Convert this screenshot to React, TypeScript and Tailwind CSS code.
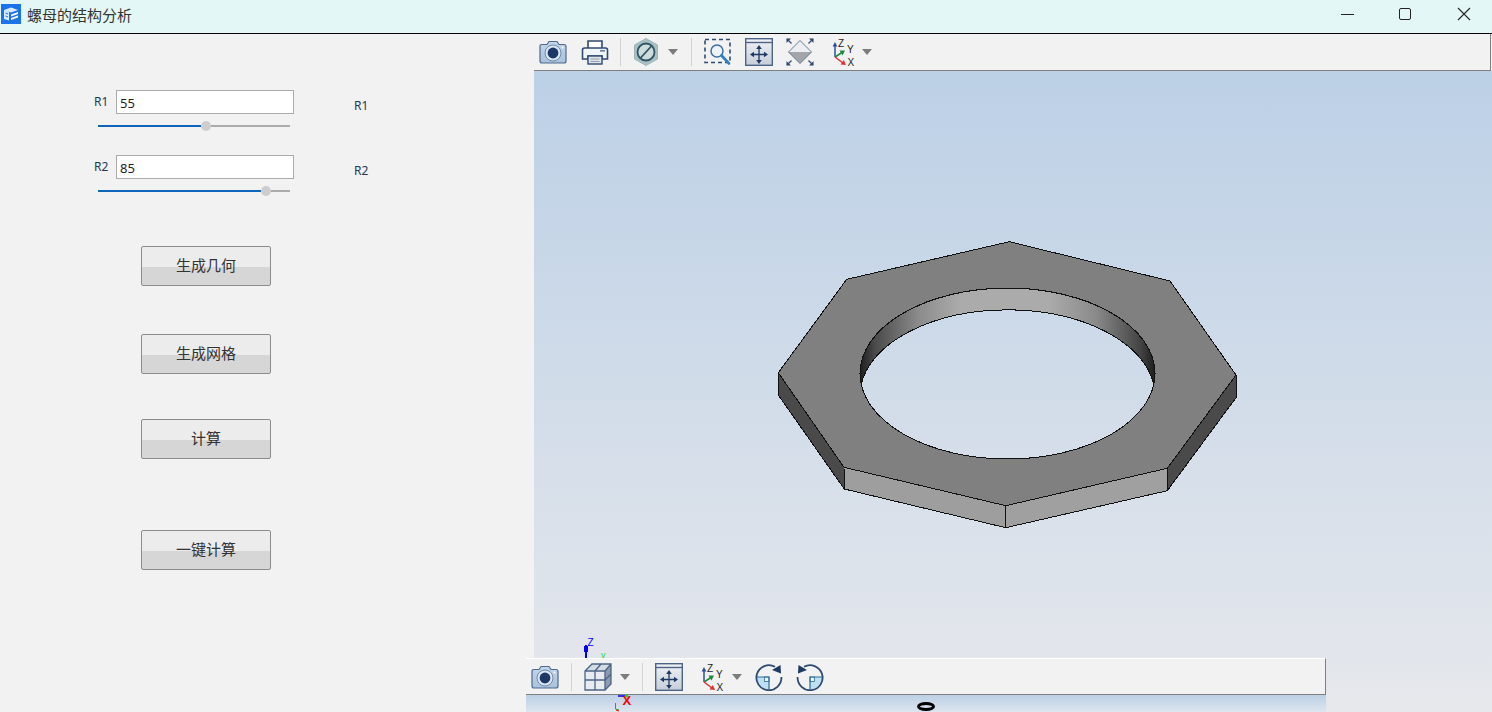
import React from 'react';

const cjk = { fontFamily: '"Noto Sans CJK SC", sans-serif' };
const uiFont = { fontFamily: '"Noto Sans", sans-serif' };

const Camera = () => (
  <svg width="28" height="28" viewBox="0 0 28 28" className="shrink-0">
    <defs>
      <linearGradient id="cam" x1="0" y1="0" x2="0" y2="1">
        <stop offset="0" stopColor="#c3d6ea" />
        <stop offset="1" stopColor="#a9c2dc" />
      </linearGradient>
    </defs>
    <path d="M1 8.5 Q1 6.5 3 6.5 H8 L10 3.5 H18 L20 6.5 H25 Q27 6.5 27 8.5 V23 Q27 25 25 25 H3 Q1 25 1 23Z" fill="url(#cam)" stroke="#4f6a8c" strokeWidth="1.2" />
    <circle cx="14" cy="15" r="8" fill="#dbe6f1" stroke="#6f8bab" strokeWidth="1" />
    <circle cx="14" cy="15" r="5.4" fill="#1d3767" />
    <circle cx="23.5" cy="9.5" r="0.9" fill="#fff" />
  </svg>
);

const Printer = () => (
  <svg width="28" height="28" viewBox="0 0 28 28" className="shrink-0">
    <path d="M7 10 V3 H21 V10" fill="#fff" stroke="#2f4a70" strokeWidth="1.6" />
    <path d="M3.5 10 H24.5 Q26.5 10 26.5 12 V21 H21 V18 H7 V21 H1.5 V12 Q1.5 10 3.5 10Z" fill="#f2f5f8" stroke="#2f4a70" strokeWidth="1.6" />
    <rect x="7" y="18" width="14" height="8" fill="#dfe4ea" stroke="#2f4a70" strokeWidth="1.4" />
    <path d="M9.5 21 H18.5 M9.5 23.5 H18.5" stroke="#8b9db3" strokeWidth="1" />
    <rect x="19" y="12" width="5" height="1.6" fill="#6c7f97" />
  </svg>
);

const HexOff = () => (
  <svg width="28" height="28" viewBox="0 0 28 28" className="shrink-0">
    <path d="M14 0.5 L25.5 7 V21 L14 27.5 L2.5 21 V7Z" fill="#a9c1c3" stroke="#9fb4b8" strokeWidth="1" />
    <circle cx="14" cy="14" r="8.5" fill="#cfdcdc" stroke="#2e5566" strokeWidth="1.8" />
    <path d="M8.5 20 L19.5 8" stroke="#2e5566" strokeWidth="1.8" />
  </svg>
);

const ZoomBox = () => (
  <svg width="28" height="28" viewBox="0 0 28 28" className="shrink-0">
    <rect x="1" y="1.5" width="25" height="23" fill="none" stroke="#2f4a70" strokeWidth="1.6" strokeDasharray="4 3" />
    <circle cx="13" cy="13" r="6" fill="#eef3f8" stroke="#3d6f9f" strokeWidth="1.5" />
    <path d="M17.5 17.5 L25 25.5" stroke="#2d7fc1" strokeWidth="2.6" strokeLinecap="round" />
  </svg>
);

const FitWindow = () => (
  <svg width="28" height="28" viewBox="0 0 28 28" className="shrink-0">
    <defs>
      <linearGradient id="fit" x1="0" y1="0" x2="0" y2="1">
        <stop offset="0" stopColor="#f0f2f5" />
        <stop offset="1" stopColor="#c6ced9" />
      </linearGradient>
    </defs>
    <rect x="0.7" y="0.7" width="26.6" height="26.6" fill="url(#fit)" stroke="#4c6487" strokeWidth="1.4" />
    <path d="M1 4.5 H27" stroke="#4c6487" strokeWidth="1.4" />
    <path d="M14 9 V24 M7 16.5 H21" stroke="#1d3a63" strokeWidth="1.3" />
    <path d="M14 7 L11.2 11 H16.8Z M14 26 L11.2 22 H16.8Z M5 16.5 L9 13.7 V19.3Z M23 16.5 L19 13.7 V19.3Z" fill="#1d3a63" />
  </svg>
);

const DiamondFit = () => (
  <svg width="28" height="28" viewBox="0 0 28 28" className="shrink-0">
    <path d="M14 2.5 L25.5 14 H2.5Z" fill="#eceef1" />
    <path d="M14 25.5 L25.5 14 H2.5Z" fill="#a3a6ab" />
    <path d="M14 2.5 L25.5 14 L14 25.5 L2.5 14Z" fill="none" stroke="#5d6c80" strokeWidth="0.9" />
    <path d="M1 1 L5.5 5.5 M27 1 L22.5 5.5 M1 27 L5.5 22.5 M27 27 L22.5 22.5" stroke="#2f4a70" strokeWidth="1.3" />
    <path d="M0.5 0.5 H5 L0.5 5Z M27.5 0.5 H23 L27.5 5Z M0.5 27.5 H5 L0.5 23Z M27.5 27.5 H23 L27.5 23Z" fill="#2f4a70" />
  </svg>
);

const Triad = () => (
  <svg width="24" height="30" viewBox="0 0 24 30" className="shrink-0" style={{ fontFamily: '"Liberation Sans", sans-serif' }}>
    <path d="M3 20 V8" stroke="#2a4fa0" strokeWidth="1.5" />
    <path d="M3 5 L0.6 9.5 H5.4Z" fill="#2a4fa0" />
    <path d="M3 20 L10 15.5" stroke="#1f8a3c" strokeWidth="1.5" />
    <path d="M13 13.5 L7.5 13.5 L10.5 18.5Z" fill="#1f8a3c" />
    <path d="M3 20 L11 26" stroke="#e03030" strokeWidth="1.5" />
    <path d="M14 28 L8.5 27.5 L11.8 23Z" fill="#e03030" />
    <text x="6" y="10" fontSize="10" fill="#222">Z</text>
    <text x="15" y="16" fontSize="10" fill="#222">Y</text>
    <text x="15.5" y="29" fontSize="10" fill="#222">X</text>
  </svg>
);

const ViewCube = () => (
  <svg width="28" height="28" viewBox="0 0 28 28" className="shrink-0">
    <path d="M1 8 L8 1 H27 L21 8Z" fill="#d5dbe3" />
    <path d="M21 8 L27 1 V21 L21 27Z" fill="#8d9bb0" />
    <rect x="1" y="8" width="20" height="19" fill="#e8ebef" />
    <path d="M1 8 L8 1 H27 V21 L21 27 H1Z M1 8 H21 L27 1 M21 8 V27 M11 8 V27 M1 17 H21 M11 8 L17 1 M21 17 L27 11" fill="none" stroke="#4c6487" strokeWidth="1.3" />
  </svg>
);

const Rotate = ({ flip }: { flip?: boolean }) => (
  <svg width="28" height="28" viewBox="0 0 28 28" className="shrink-0" style={flip ? { transform: 'scaleX(-1)' } : undefined}>
    <path d="M2 14 H14 V26.5 A12.5 12.5 0 0 1 2 14Z" fill="#bfe0f3" />
    <rect x="9.5" y="14" width="4.5" height="4.5" fill="#eaf5fb" stroke="#2d6c9c" strokeWidth="0.8" />
    <path d="M1.5 14 H14 V26" fill="none" stroke="#2d6c9c" strokeWidth="1.2" />
    <path d="M20 3.8 A12.5 12.5 0 1 0 26.4 14" fill="none" stroke="#2f4a70" strokeWidth="1.8" />
    <path d="M25.5 2 L26 10.5 L17 7Z" fill="#1d3a63" />
  </svg>
);

const Caret = () => <div className="w-0 h-0 shrink-0 border-x-[5.5px] border-x-transparent border-t-[6px] border-t-[#7c7c7c]" />;
const Sep = () => <div className="w-px h-[28px] shrink-0 bg-[#d2d2d2]" />;

const Field = ({ label, value, percent, className }: { label: string; value: string; percent: number; className: string }) => (
  <div className={className}>
    <div className="flex items-center">
      <span style={uiFont} className="w-[22px] text-[12px] leading-none text-[#1f3a56]">{label}</span>
      <div style={uiFont} className="w-[178px] h-[24px] border border-[#ababab] bg-white pl-[3px] pt-[1px] text-[13px] leading-[23px] text-[#222]">{value}</div>
    </div>
    <div className="flex items-center ml-[4px] mt-[7px] w-[192px] h-[10px]">
      <div className="h-[2px] bg-[#0f66b8]" style={{ width: percent }} />
      <div className="w-[10px] h-[10px] shrink-0 rounded-full bg-[#cdcdcd]" />
      <div className="h-[2px] flex-1 bg-[#ababab]" />
    </div>
  </div>
);

const ActionButton = ({ text, className }: { text: string; className: string }) => (
  <button
    style={cjk}
    className={`block w-[130px] h-[40px] pb-[2px] rounded-[2px] border border-[#8c8c8c] bg-[linear-gradient(#ececec_52%,#d6d6d6_52%)] text-[15px] text-[#333] ${className}`}
  >
    {text}
  </button>
);

const Nut = () => (
  <svg viewBox="534 71 958 641" className="w-full h-full block">
    <defs>
      <linearGradient id="wall" gradientUnits="userSpaceOnUse" x1="860" y1="0" x2="1155" y2="0">
        <stop offset="0" stopColor="#1e1e1e" />
        <stop offset="0.05" stopColor="#4a4a4a" />
        <stop offset="0.2" stopColor="#8c8c8c" />
        <stop offset="0.34" stopColor="#ababab" />
        <stop offset="0.64" stopColor="#ababab" />
        <stop offset="0.8" stopColor="#8a8a8a" />
        <stop offset="0.95" stopColor="#444" />
        <stop offset="1" stopColor="#1e1e1e" />
      </linearGradient>
    </defs>
    <g stroke="#111" strokeWidth="1" shapeRendering="crispEdges" strokeLinejoin="round">
      <polygon points="778.3,372.7 844,467.3 844.3,489 778.3,395" fill="#4a4a4a" />
      <polygon points="844,467.3 1005.7,505.7 1005.7,527.7 844.3,489" fill="#9e9e9e" />
      <polygon points="1005.7,505.7 1167.3,468.3 1167.3,490.7 1005.7,527.7" fill="#a0a0a0" />
      <polygon points="1167.3,468.3 1236,375 1236,397.7 1167.3,490.7" fill="#4a4a4a" />
      <path
        fillRule="evenodd"
        fill="#808080"
        d="M1009.3 241.7 L1170 281 L1236 375 L1167.3 468.3 L1005.7 505.7 L844 467.3 L778.3 372.7 L846.7 279.3Z M860 373.5 A147.5 85.5 0 0 0 1155 373.5 A147.5 85.5 0 0 0 860 373.5Z"
      />
      <path fill="url(#wall)" d="M861.2 384.5 A147.5 85.5 0 1 1 1153.8 384.5 A147.5 85.5 0 0 0 861.2 384.5Z" />
    </g>
  </svg>
);

export default function App() {
  return (
    <div className="w-[1492px] h-[712px] overflow-hidden relative bg-[#f2f2f2] flex flex-col" style={{ fontFamily: '"Liberation Sans", sans-serif' }}>
      {/* title bar */}
      <div className="h-[34px] shrink-0 flex items-center pb-[5px] bg-[#e3f8f6] border-b border-black">
        <svg width="20" height="20" viewBox="0 0 20 20" className="ml-[1px] shrink-0">
          <rect width="20" height="20" fill="#1a73e8" />
          <path d="M3 6 L10 3.5 L17 6 L10 8.5Z M3 6 V15 L8 16.5 V8Z" fill="#d9ecff" />
          <path d="M10 10.5 L17 8 V10 L10 12.5Z M10 14 L17 11.5 V13.5 L10 16Z" fill="#fff" />
          <path d="M4.5 9 L7 10 M4.5 12 L7 13" stroke="#1a73e8" strokeWidth="1" />
        </svg>
        <span style={cjk} className="ml-[6px] text-[15px] leading-none text-[#333]">螺母的结构分析</span>
        <div className="ml-auto flex items-center mr-[21px]">
          <div className="w-[13px] h-px bg-[#222]" />
          <div className="ml-[45px] w-[12px] h-[12px] rounded-[2px] border-[1.5px] border-[#222]" />
          <svg width="14" height="14" viewBox="0 0 14 14" className="ml-[46px]">
            <path d="M1 1 L13 13 M13 1 L1 13" stroke="#222" strokeWidth="1.1" />
          </svg>
        </div>
      </div>

      <div className="flex flex-1 min-h-0">
        {/* form panel */}
        <div className="w-[534px] shrink-0 pl-[94px]">
          <Field className="mt-[56px]" label="R1" value="55" percent={103} />
          <Field className="mt-[24px]" label="R2" value="85" percent={163} />
          <ActionButton className="ml-[47px] mt-[50px]" text="生成几何" />
          <ActionButton className="ml-[47px] mt-[48px]" text="生成网格" />
          <ActionButton className="ml-[47px] mt-[45px]" text="计算" />
          <ActionButton className="ml-[47px] mt-[71px]" text="一键计算" />
        </div>

        {/* viewer */}
        <div className="flex-1 min-w-0 flex flex-col">
          <div className="h-[37px] shrink-0 flex items-center pl-[5px] mr-px border-b border-r border-[#7f7f7f]">
            <Camera />
            <div className="ml-[14px]"><Printer /></div>
            <div className="ml-[11px]"><Sep /></div>
            <div className="ml-[11px]"><HexOff /></div>
            <div className="ml-[8px]"><Caret /></div>
            <div className="ml-[13px]"><Sep /></div>
            <div className="ml-[12px]"><ZoomBox /></div>
            <div className="ml-[13px]"><FitWindow /></div>
            <div className="ml-[13px]"><DiamondFit /></div>
            <div className="ml-[18px]"><Triad /></div>
            <div className="ml-[6px]"><Caret /></div>
          </div>
          <div className="flex-1 min-h-0 bg-[linear-gradient(#bcd0e6,#e6e8ec)]">
            <Nut />
          </div>
        </div>
      </div>

      {/* second viewer peeking below, its toolbar lies over the first viewer */}
      <div className="absolute left-[526px] top-[658px] w-[800px] h-[54px] flex flex-col">
        <div className="h-[37px] shrink-0 flex items-center pl-[5px] bg-[#f2f2f2] border-t border-t-white border-b border-b-[#7f7f7f] border-r border-r-[#7f7f7f]">
          <Camera />
          <div className="ml-[12px]"><Sep /></div>
          <div className="ml-[12px]"><ViewCube /></div>
          <div className="ml-[8px]"><Caret /></div>
          <div className="ml-[12px]"><Sep /></div>
          <div className="ml-[12px]"><FitWindow /></div>
          <div className="ml-[18px]"><Triad /></div>
          <div className="ml-[7px]"><Caret /></div>
          <div className="ml-[13px]"><Rotate /></div>
          <div className="ml-[13px]"><Rotate flip /></div>
        </div>
        <div className="flex-1 bg-[linear-gradient(#bcd0e6,#dde5ee)]" />
      </div>

      {/* labels beside the form */}
      <span style={uiFont} className="absolute left-[354px] top-[97px] text-[12px] text-[#1f3a56]">R1</span>
      <span style={uiFont} className="absolute left-[354px] top-[162px] text-[12px] text-[#1f3a56]">R2</span>

      {/* stray triad bits of the second viewer */}
      <svg width="50" height="24" viewBox="0 0 50 24" className="absolute left-[580px] top-[636px]" style={{ fontFamily: '"Liberation Sans", sans-serif' }}>
        <path d="M6 9 V22" stroke="#0000ff" strokeWidth="2" />
        <path d="M6 10 V16" stroke="#0000ff" strokeWidth="4" />
        <text x="7.5" y="10" fontSize="10" fill="#0000ff">Z</text>
        <text x="21" y="22" fontSize="9" fill="#22dd22">v</text>
      </svg>
      <svg width="30" height="22" viewBox="0 -5 30 22" className="absolute left-[610px] top-[690px] overflow-visible" style={{ fontFamily: '"Liberation Sans", sans-serif' }}>
        <path d="M8 1 H15" stroke="#0000ff" strokeWidth="1.5" />
        <path d="M15 1 H18" stroke="#22cc22" strokeWidth="3" />
        <text x="12.5" y="10" fontSize="13" fontWeight="700" fill="#ff0000">X</text>
        <path d="M5.5 8 V14 L9 15" fill="none" stroke="#22aa22" strokeWidth="1" />
        <path d="M6 15 L9 16" stroke="#ff0000" strokeWidth="1" />
      </svg>
      <div className="absolute left-[917px] top-[702px] w-[18px] h-[9px] rounded-[50%] border-[3px] border-black" />
    </div>
  );
}
